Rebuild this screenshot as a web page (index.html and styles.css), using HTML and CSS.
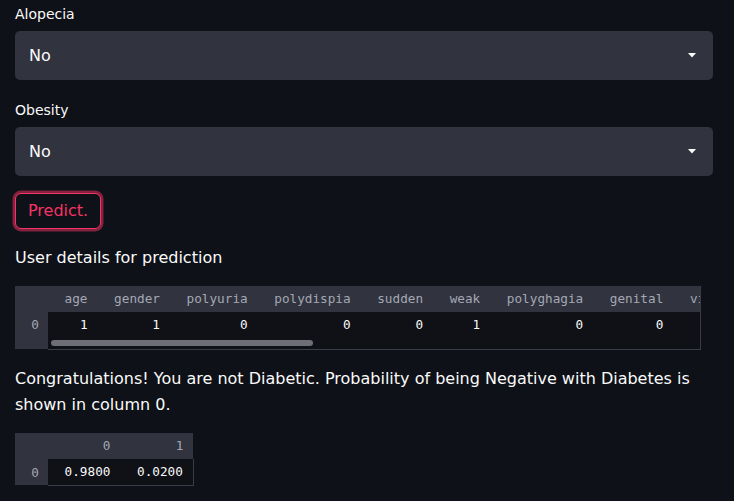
FILE: index.html
```html
<!DOCTYPE html>
<html lang="en">
<head>
<meta charset="utf-8">
<title>Diabetes prediction</title>
<link rel="stylesheet" href="styles.css">
</head>
<body>
<main class="main">
  <div class="field">
    <div class="label">Alopecia</div>
    <div class="select">
      <span class="select-value">No</span>
      <svg class="caret" width="8" height="5" viewBox="0 0 8 5"><polygon points="0,0 8,0 4,4.5" fill="#fafafa"/></svg>
    </div>
  </div>
  <div class="field field-next">
    <div class="label">Obesity</div>
    <div class="select">
      <span class="select-value">No</span>
      <svg class="caret" width="8" height="5" viewBox="0 0 8 5"><polygon points="0,0 8,0 4,4.5" fill="#fafafa"/></svg>
    </div>
  </div>
  <button class="btn" type="button">Predict.</button>
  <p class="text heading">User details for prediction</p>
  <div class="grid grid-wide">
    <table class="df">
      <thead>
        <tr><th class="idx"></th><th>age</th><th>gender</th><th>polyuria</th><th>polydispia</th><th>sudden</th><th>weak</th><th>polyghagia</th><th>genital</th><th>visual</th></tr>
      </thead>
      <tbody>
        <tr><th class="idx">0</th><td>1</td><td>1</td><td>0</td><td>0</td><td>0</td><td>1</td><td>0</td><td>0</td><td>0</td></tr>
        <tr class="scroll-row"><th class="idx"></th><td colspan="9"></td></tr>
      </tbody>
    </table>
    <div class="thumb"></div>
  </div>
  <p class="text result">Congratulations! You are not Diabetic. Probability of being Negative with Diabetes is shown in column 0.</p>
  <div class="grid grid-small">
    <table class="df">
      <thead>
        <tr><th class="idx"></th><th>0</th><th>1</th></tr>
      </thead>
      <tbody>
        <tr><th class="idx">0</th><td>0.9800</td><td>0.0200</td></tr>
      </tbody>
    </table>
  </div>
</main>
</body>
</html>
```
FILE: styles.css
```css
html, body {
  margin: 0;
  padding: 0;
  background: #0e1117;
}
body {
  color: #fafafa;
  font-family: "DejaVu Sans", "Noto Sans", sans-serif;
  overflow: hidden;
}
.main {
  width: 698px;
  padding: 4px 21px 0 15px;
}
.label {
  font-size: 14px;
  line-height: 21px;
  margin-bottom: 6px;
}
.field-next {
  margin-top: 20px;
}
.select {
  height: 49px;
  box-sizing: border-box;
  background: #31333f;
  border-radius: 5px;
  display: flex;
  align-items: center;
  justify-content: space-between;
  padding: 0 17px 0 14px;
  font-size: 16px;
}
.caret {
  display: block;
}
.btn {
  display: block;
  margin-top: 16.5px;
  height: 36px;
  box-sizing: border-box;
  padding: 0 12px;
  background: #0e1117;
  color: #f63366;
  border: 1px solid #f63366;
  border-radius: 6px;
  box-shadow: 0 0 0 2.5px rgba(246, 51, 102, 0.5);
  font-family: "DejaVu Sans", sans-serif;
  font-size: 16px;
  line-height: 24px;
}
.text {
  margin: 0;
  font-size: 16px;
  line-height: 26px;
}
.heading {
  margin-top: 16.3px;
}
.result {
  margin-top: 15.8px;
}
.grid {
  position: relative;
  overflow: hidden;
  margin-top: 15.2px;
}
.grid-wide {
  width: 686px;
  border-right: 1px solid #3a3c46;
  box-sizing: border-box;
}
.grid-small {
  display: inline-block;
  vertical-align: top;
}
.df {
  width: max-content;
  border-collapse: collapse;
  font-family: "DejaVu Sans Mono", monospace;
  font-size: 12.7px;
  white-space: nowrap;
}
.df th, .df td {
  height: 26px;
  padding: 0 10px 0 16.6px;
  text-align: right;
  vertical-align: middle;
  font-weight: normal;
}
.df thead th {
  background: #31333f;
  color: #a3a8b4;
}
.df tbody td {
  color: #fafafa;
  background: #0f1117;
}
.df .idx {
  width: 33px;
  min-width: 33px;
  box-sizing: border-box;
  padding: 0 9px 0 0;
  background: #31333f;
  color: #a3a8b4;
}
.df tbody tr:last-child td {
  border-bottom: 1px solid #3a3c46;
}
.grid-small .df tbody td:last-child {
  border-right: 1px solid #3a3c46;
}
.scroll-row th, .scroll-row td {
  height: 11px;
}
.thumb {
  position: absolute;
  left: 36px;
  top: 54px;
  width: 262px;
  height: 6px;
  border-radius: 3px;
  background: #6e6f76;
}
```
